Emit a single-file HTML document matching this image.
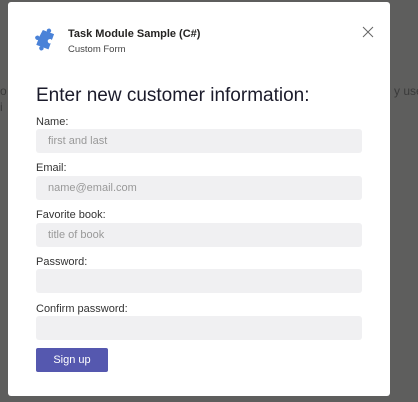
<!DOCTYPE html>
<html><head><style>
body{margin:0;width:418px;height:402px;background:#5e5e5d;position:relative;overflow:hidden;font-family:"Liberation Sans",sans-serif}
.bg{position:absolute;color:#3a3a3a;font-size:12px;white-space:nowrap}
.dlg{position:absolute;left:8px;top:2px;width:382px;height:394px;background:#fff;border-radius:3px}
.a{position:absolute;white-space:nowrap}
.lbl{position:absolute;left:28px;font-size:11px;color:#333}
.in{position:absolute;left:28px;width:326px;height:24px;background:#f0f0f2;border-radius:3px;font-size:11px;color:#999;line-height:24px;padding-left:12px;box-sizing:border-box}
</style></head><body>
<div class="bg" style="left:0;top:84px">o</div>
<div class="bg" style="left:0;top:100px">i</div>
<div class="bg" style="left:394px;top:84px">y usef</div>
<div class="dlg">
<svg class="a" style="left:24px;top:25px" width="26" height="26" viewBox="0 0 24 24"><path d="M7 4h4a2 2 0 1 1 3 0h4v6a2 2 0 1 0 0 3v6h-5a2 2 0 1 1-3 0H6v-5a2 2 0 1 1 0-3z" fill="#4a82d8" transform="rotate(20 12 12)"/></svg>
<div class="a" style="left:60px;top:26px;font-size:11px;font-weight:bold;color:#252423">Task Module Sample (C#)</div>
<div class="a" style="left:60px;top:42px;font-size:9.5px;color:#444">Custom Form</div>
<svg class="a" style="left:354px;top:24px" width="12" height="12" viewBox="0 0 12 12"><path d="M1 1L11 11M11 1L1 11" stroke="#666" stroke-width="1"/></svg>
<div class="a" style="left:28px;top:83px;font-size:19px;color:#1b1b2b">Enter new customer information:</div>
<div class="lbl" style="top:114px">Name:</div><div class="in" style="top:127px">first and last</div>
<div class="lbl" style="top:160px">Email:</div><div class="in" style="top:174px">name@email.com</div>
<div class="lbl" style="top:207px">Favorite book:</div><div class="in" style="top:221px">title of book</div>
<div class="lbl" style="top:254px">Password:</div><div class="in" style="top:267px"></div>
<div class="lbl" style="top:301px">Confirm password:</div><div class="in" style="top:314px"></div>
<div class="a" style="left:28px;top:346px;width:72px;height:24px;background:#5558af;border-radius:2px;color:#fff;font-size:11px;line-height:24px;text-align:center">Sign up</div>
</div>
</body></html>
